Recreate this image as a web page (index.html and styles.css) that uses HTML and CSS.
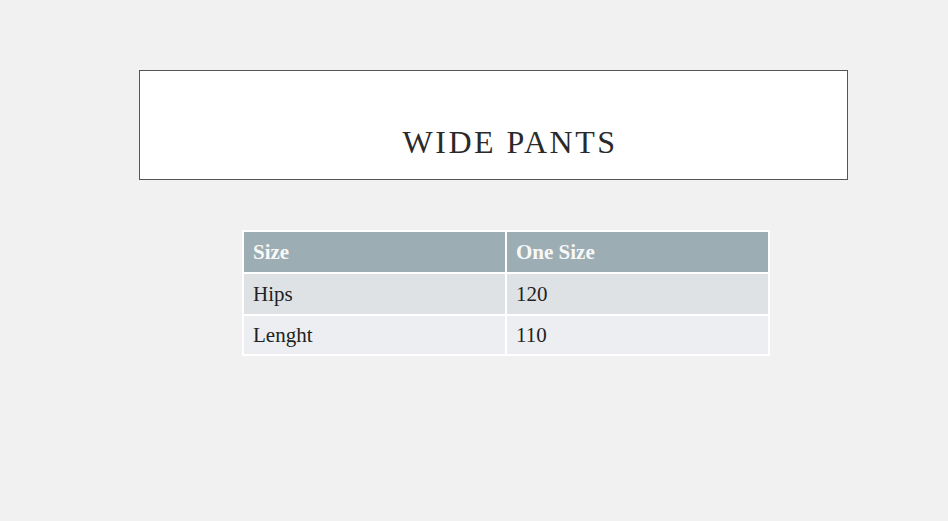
FILE: index.html
```html
<!DOCTYPE html>
<html>
<head>
<meta charset="utf-8">
<link rel="stylesheet" href="styles.css">
</head>
<body>
<div class="page">
  <div class="title-box">
    <h1 class="title">WIDE PANTS</h1>
  </div>
  <table class="size-table">
    <thead>
      <tr class="head-row"><th>Size</th><th>One Size</th></tr>
    </thead>
    <tbody>
      <tr class="row-a"><td>Hips</td><td>120</td></tr>
      <tr class="row-b"><td>Lenght</td><td>110</td></tr>
    </tbody>
  </table>
</div>
</body>
</html>
```
FILE: styles.css
```css
html, body {
  margin: 0;
  padding: 0;
  background: #f1f1f1;
}
body {
  font-family: "Liberation Serif", "Times New Roman", serif;
  color: #222;
}
.page {
  padding-top: 70px;
  padding-left: 139px;
}
.title-box {
  box-sizing: border-box;
  width: 709px;
  height: 110px;
  background: #fff;
  border: 1px solid #555;
  padding-top: 55px;
  padding-left: 33px;
  text-align: center;
}
.title {
  margin: 0;
  font-weight: normal;
  font-size: 32px;
  line-height: 32px;
  letter-spacing: 2.5px;
  color: #2a2a2a;
}
.size-table {
  margin-top: 50px;
  margin-left: 103px;
  width: 528px;
  border-collapse: separate;
  border-spacing: 2px;
  background: #fff;
  font-size: 21px;
  table-layout: fixed;
}
.size-table th,
.size-table td {
  text-align: left;
  padding: 0 0 0 9px;
  vertical-align: middle;
}
.head-row th {
  height: 40px;
  background: #9caeb4;
  color: #f8f8f8;
  font-weight: bold;
}
.row-a td {
  height: 40px;
  background: #dfe2e5;
}
.row-b td {
  height: 38px;
  background: #edeef1;
}
```
